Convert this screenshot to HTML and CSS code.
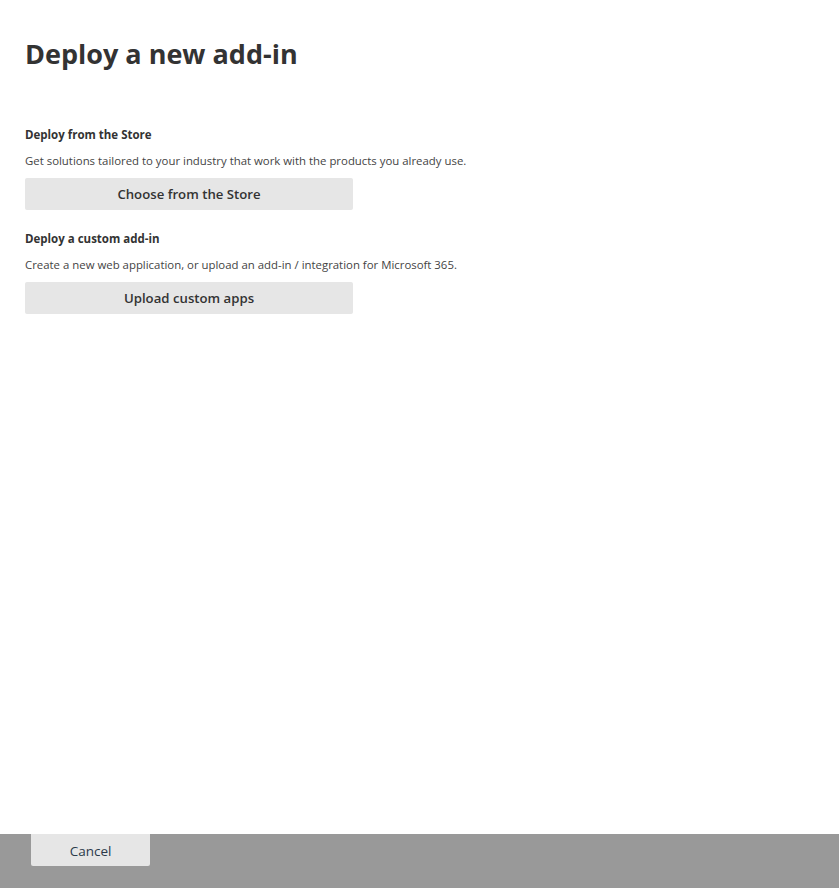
FILE: index.html
```html
<!DOCTYPE html>
<html lang="en">
<head>
<meta charset="utf-8">
<title>Deploy a new add-in</title>
<link rel="stylesheet" href="styles.css">
</head>
<body>
<div class="page">
  <main class="content">
    <h1 class="title">Deploy a new add-in</h1>
    <section class="section first">
      <h2 class="heading">Deploy from the Store</h2>
      <p class="desc">Get solutions tailored to your industry that work with the products you already use.</p>
      <button class="action">Choose from the Store</button>
    </section>
    <section class="section">
      <h2 class="heading">Deploy a custom add-in</h2>
      <p class="desc">Create a new web application, or upload an add-in / integration for Microsoft 365.</p>
      <button class="action">Upload custom apps</button>
    </section>
  </main>
  <footer class="footer">
    <button class="cancel">Cancel</button>
  </footer>
</div>
</body>
</html>
```

FILE: styles.css
```css
html, body {
  margin: 0;
  padding: 0;
  background: #ffffff;
}
body {
  font-family: "Open Sans", "Noto Sans", "Liberation Sans", sans-serif;
  color: #333333;
}
.page {
  display: flex;
  flex-direction: column;
  height: 888px;
}
.content {
  flex: 1;
  padding: 36px 0 0 25px;
  display: flex;
  flex-direction: column;
  align-items: flex-start;
}
.title {
  margin: 0;
  font-size: 27px;
  line-height: 36px;
  font-weight: 700;
  color: #333333;
  letter-spacing: 0;
}
.section {
  display: flex;
  flex-direction: column;
  align-items: flex-start;
  margin-top: 21px;
}
.section.first {
  margin-top: 55px;
}
.heading {
  margin: 0;
  font-size: 11.5px;
  line-height: 16px;
  font-weight: 700;
  color: #333333;
}
.desc {
  margin: 10px 0 0 0;
  font-size: 11.4px;
  line-height: 16px;
  color: #444444;
}
.action {
  margin-top: 9px;
  width: 328px;
  height: 32px;
  border: none;
  border-radius: 2px;
  background: #e6e6e6;
  font-family: inherit;
  font-size: 13.2px;
  font-weight: 600;
  color: #333333;
  padding: 0;
}
.footer {
  height: 54px;
  background: #999999;
  display: flex;
  align-items: flex-start;
  padding-left: 31px;
}
.cancel {
  width: 119px;
  height: 32px;
  border: none;
  border-radius: 0 0 2px 2px;
  background: #e6e6e6;
  font-family: inherit;
  font-size: 13.5px;
  color: #2b3a4a;
  padding: 2px 0 0 0;
}
```
